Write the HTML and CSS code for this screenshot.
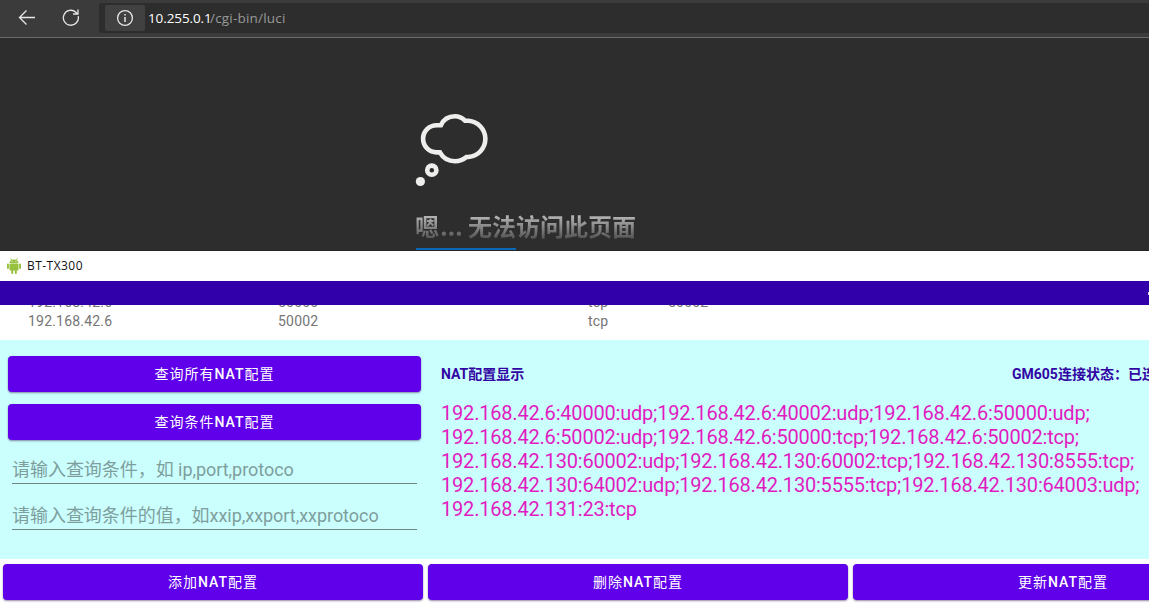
FILE: index.html
```html
<!DOCTYPE html>
<html lang="zh-CN">
<head>
<meta charset="utf-8">
<title>BT-TX300</title>
<link rel="stylesheet" href="styles.css">
</head>
<body>
<div class="screen">
  <header class="toolbar">
    <svg class="nav-icon" width="18" height="18" viewBox="0 0 18 18"><path d="M17 8.5H1.5M8.500 1.500l-7 7 7 7"/></svg>
    <svg class="nav-icon reload" width="18" height="18" viewBox="0 0 18 18"><path d="M16.200 7.200A7.500 7.500 0 1 1 13.900 3.200L15.500 4.700M11 5h5V.5"/></svg>
    <div class="address">
      <span class="info"><svg class="nav-icon" width="18" height="18" viewBox="0 0 18 18"><circle cx="9" cy="9" r="7.4"/><path d="M9 8v5M9 5v1.400" stroke-width="1.5"/></svg></span>
      <span class="url"><span class="host">10.255.0.1</span><span class="path">/cgi-bin/luci</span></span>
    </div>
  </header>
  <main class="error">
    <svg class="thought" width="74" height="74" viewBox="415 113 74 74">
      <path d="M440.900 125.200H436.700a13.500 13.500 0 0 0 0 27.200h3.200C443 158 448.700 161.200 455 161.200c4.500 0 8-1.200 11.500-4.200H468.500a18.200 18.200 0 0 0 0-36.300h-3.500c-3-3-6-4.400-10-4.400-6.500 0-11.500 3.200-14.100 8.900z"/>
      <circle cx="431.800" cy="170.200" r="4.600"/>
      <circle class="dot" cx="420.400" cy="181.500" r="4.600"/>
    </svg>
    <h1 class="error-title"><span>嗯</span><span class="dots">...</span><span>无法访问此页面</span></h1>
    <div class="accent"></div>
  </main>
  <section class="app">
    <div class="titlebar">
      <svg width="14" height="16" viewBox="0 0 14 16"><g fill="#97c13c"><path d="M2.500 5C2.700 2.800 4 1.400 7 1.400S11.300 2.800 11.500 5z"/><path d="M3.500.3 5 2.400M10.500.300 9 2.400" stroke="#97c13c" stroke-width=".8"/><rect x="2.500" y="5.600" width="9" height="7" rx=".8"/><rect x="0" y="5.500" width="1.900" height="5.500" rx=".9"/><rect x="12.100" y="5.500" width="1.900" height="5.500" rx=".9"/><rect x="4.200" y="11" width="2" height="5" rx=".9"/><rect x="7.800" y="11" width="2" height="5" rx=".9"/></g><circle cx="5" cy="3.400" r=".5" fill="#fff"/><circle cx="9" cy="3.400" r=".5" fill="#fff"/></svg>
      <span>BT-TX300</span>
    </div>
    <div class="statusbar"><i class="signal"></i></div>
    <div class="list">
      <div class="row"><span>192.168.42.6</span><span>50000</span><span>tcp</span><span>50002</span></div>
      <div class="row"><span>192.168.42.6</span><span>50002</span><span>tcp</span><span></span></div>
    </div>
    <div class="panel">
      <div class="query">
        <button class="btn">查询所有<b>NAT</b>配置</button>
        <button class="btn">查询条件<b>NAT</b>配置</button>
        <div class="field">请输入查询条件，如 ip,port,protoco</div>
        <div class="field">请输入查询条件的值，如xxip,xxport,xxprotoco</div>
      </div>
      <div class="display">
        <div class="heads"><span class="head-nat">NAT配置显示</span><span class="head-state">GM605连接状态：已连接</span></div>
        <div class="result">192.168.42.6:40000:udp;192.168.42.6:40002:udp;192.168.42.6:50000:udp;<br>192.168.42.6:50002:udp;192.168.42.6:50000:tcp;192.168.42.6:50002:tcp;<br>192.168.42.130:60002:udp;192.168.42.130:60002:tcp;192.168.42.130:8555:tcp;<br>192.168.42.130:64002:udp;192.168.42.130:5555:tcp;192.168.42.130:64003:udp;<br>192.168.42.131:23:tcp</div>
      </div>
    </div>
    <div class="actions">
      <button class="btn">添加<b>NAT</b>配置</button>
      <button class="btn">删除<b>NAT</b>配置</button>
      <button class="btn">更新<b>NAT</b>配置</button>
    </div>
  </section>
</div>
</body>
</html>
```

FILE: styles.css
```css
* { box-sizing: border-box; }
body { margin: 0; font-family: Roboto, "Noto Sans CJK SC", sans-serif; }
svg { display: block; flex: none; }
.screen { width: 1149px; height: 609px; overflow: hidden; display: flex; flex-direction: column; background: #fff; }

.toolbar { height: 38px; flex: none; display: flex; align-items: center; padding: 0 0 1px 18px; background: #3b3b3b; border-bottom: 1px solid #6b6b6b; }
.nav-icon { fill: none; stroke: #e6e6e6; stroke-width: 1.3; }
.reload { margin-left: 26px; }
.address { margin-left: 19px; flex: 1; height: 30px; display: flex; align-items: center; padding-left: 6px; background: #2d2d2d; border-radius: 3px 0 0 3px; }
.info { width: 40px; height: 26px; display: flex; align-items: center; justify-content: center; background: #414141; border-radius: 2px; }
.url { margin-left: 3px; padding-bottom: 1px; font: 13.5px/20px "Open Sans", sans-serif; color: #999; white-space: nowrap; }
.host { color: #fff; display: inline-block; width: 62px; letter-spacing: -.1px; }
.path { letter-spacing: .2px; }

.error { height: 213px; flex: none; padding: 75px 0 0 415px; background: #2d2d2d; border-bottom: 1px solid #252323; }
.thought { fill: none; stroke: #eeefed; stroke-width: 4.6; }
.thought .dot { fill: #eeefed; stroke: none; }
.error-title { margin: 21px 0 0; height: 36px; width: 240px; display: flex; font: 700 24px/36px "Noto Sans CJK SC", sans-serif; white-space: nowrap; background: linear-gradient(#b5b5b5 22%, #555 85%); -webkit-background-clip: text; background-clip: text; color: transparent; }
.dots { width: 29px; padding-left: 1px; letter-spacing: -.3px; }
.accent { width: 100px; height: 2px; margin: 4px 0 0 1px; background: #0a69b7; }

.app { flex: 1; display: flex; flex-direction: column; }
.titlebar { height: 30px; display: flex; align-items: center; gap: 6px; padding-left: 7px; font: 12px/16px "Open Sans", sans-serif; letter-spacing: .45px; color: #111; }
.statusbar { height: 24px; display: flex; align-items: center; justify-content: flex-end; background: #3200ab; }
.signal { width: 1px; height: 3px; background: #d8ccf0; }
.list { height: 35px; overflow: hidden; display: flex; flex-direction: column; justify-content: flex-end; padding-bottom: 9px; }
.row { flex: none; display: grid; grid-template-columns: 250px 310px 80px 80px; padding-left: 28px; font-size: 14px; line-height: 19px; letter-spacing: .2px; color: #757575; }

.panel { height: 219px; display: flex; background: #cbfffe; }
.query { width: 429px; flex: none; display: flex; flex-direction: column; padding: 16px 8px 0; }
.btn { height: 36px; flex: none; padding: 0; border: 0; border-radius: 4px; background: #6000ea; color: #fff; font: 400 14px/36px Roboto, "Noto Sans CJK SC", sans-serif; letter-spacing: 1px; box-shadow: 0 1px 2px rgba(50, 20, 80, .5); }
.btn b { font-weight: 500; }
.query .btn { margin-bottom: 12px; }
.field { height: 34px; margin: 0 4px 12px; padding-top: 7px; border-bottom: 1px solid #6f8583; font-size: 18px; line-height: 26px; letter-spacing: -.04px; color: #7e9e9d; white-space: nowrap; }
.query .btn + .field { margin-top: -2px; }
.display { flex: 1; min-width: 0; padding: 24px 0 0 12px; overflow: hidden; white-space: nowrap; }
.heads { display: flex; font-size: 14px; line-height: 20px; font-weight: 700; color: #3205a3; }
.head-nat { width: 571px; flex: none; }
.result { margin-top: 17px; font-size: 20px; line-height: 24px; letter-spacing: -.195px; color: #e11bc0; }

.actions { width: 1275px; flex: 1; display: flex; gap: 5px; padding: 5px 0 0 3px; }
.actions .btn { width: 420px; }
```
